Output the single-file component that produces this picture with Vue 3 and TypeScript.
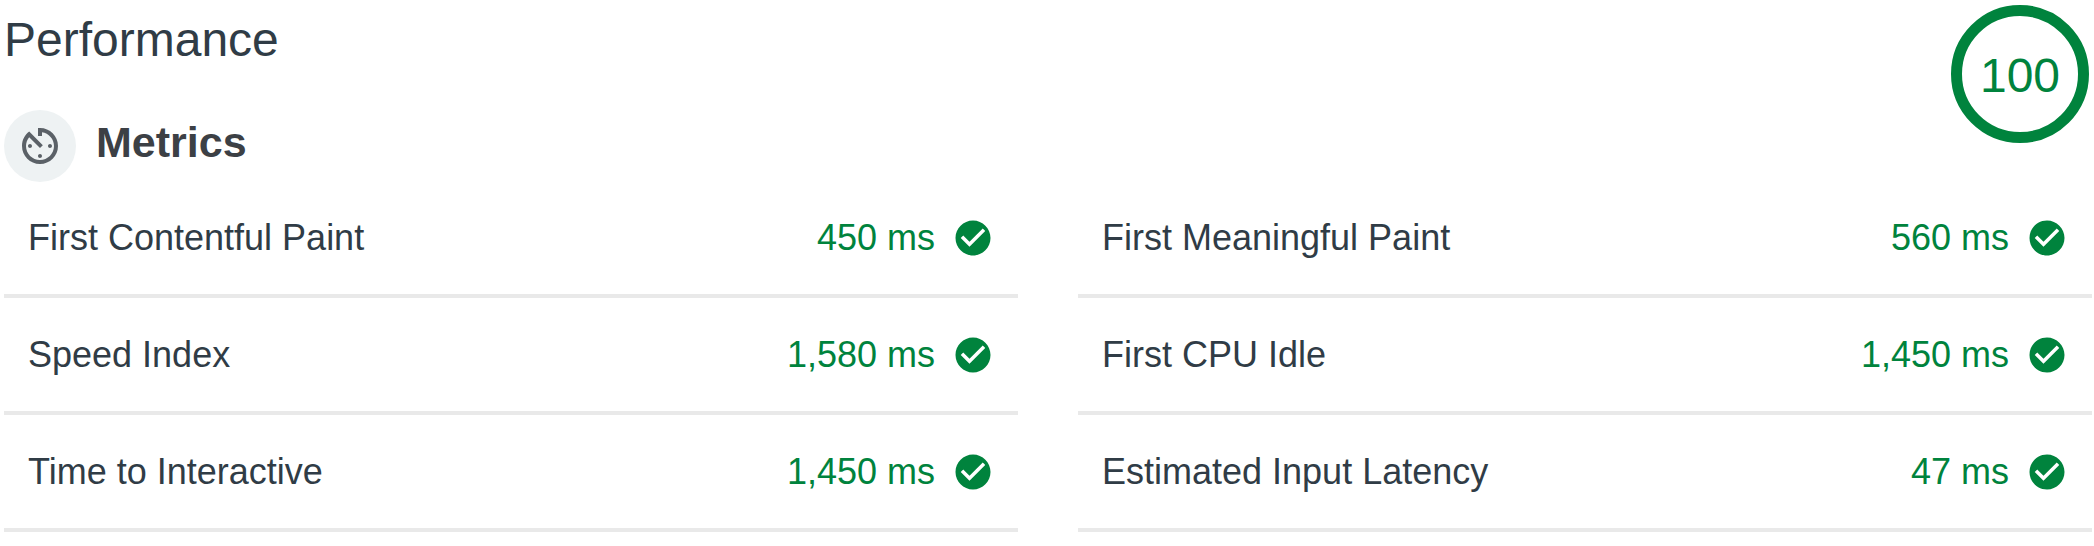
<script setup lang="ts">
interface Metric {
  label: string
  value: string
}

const score: number = 100

const columns: Metric[][] = [
  [
    { label: 'First Contentful Paint', value: '450 ms' },
    { label: 'Speed Index', value: '1,580 ms' },
    { label: 'Time to Interactive', value: '1,450 ms' },
  ],
  [
    { label: 'First Meaningful Paint', value: '560 ms' },
    { label: 'First CPU Idle', value: '1,450 ms' },
    { label: 'Estimated Input Latency', value: '47 ms' },
  ],
]
</script>

<template>
  <main class="report">
    <header class="summary">
      <div class="headings">
        <h1 class="title">Performance</h1>
        <div class="section-heading">
          <span class="badge">
            <svg class="timer" viewBox="0 0 24 24" aria-hidden="true">
              <path
                d="M11 17c0 .55.45 1 1 1s1-.45 1-1-.45-1-1-1-1 .45-1 1zm0-14v4h2V5.08c3.39.49 6 3.39 6 6.92 0 3.87-3.13 7-7 7s-7-3.13-7-7c0-1.68.59-3.22 1.58-4.42L12 13l1.41-1.41-6.8-6.8v.02C4.42 6.45 3 9.05 3 12c0 4.97 4.02 9 9 9 4.97 0 9-4.03 9-9s-4.03-9-9-9h-1zm7 9c0-.55-.45-1-1-1s-1 .45-1 1 .45 1 1 1 1-.45 1-1zM6 12c0 .55.45 1 1 1s1-.45 1-1-.45-1-1-1-1 .45-1 1z"
              />
            </svg>
          </span>
          <h2 class="subtitle">Metrics</h2>
        </div>
      </div>
      <div class="gauge">{{ score }}</div>
    </header>

    <section class="columns">
      <dl v-for="(column, index) in columns" :key="index" class="metrics">
        <div v-for="metric in column" :key="metric.label" class="metric">
          <dt class="label">{{ metric.label }}</dt>
          <dd class="value">
            {{ metric.value }}
            <svg class="check" viewBox="0 0 24 24" aria-hidden="true">
              <path
                d="M12 2C6.48 2 2 6.48 2 12s4.48 10 10 10 10-4.48 10-10S17.52 2 12 2zm-2 15l-5-5 1.41-1.41L10 14.17l7.59-7.59L19 8l-9 9z"
              />
            </svg>
          </dd>
        </div>
      </dl>
    </section>
  </main>
</template>

<style>
body {
  margin: 0;
  background: #fff;
}
</style>

<style scoped>
.report {
  padding: 0 2px 0 4px;
  font-family: 'Helvetica Neue', Helvetica, 'Liberation Sans', Arial, sans-serif;
  color: #303c46;
}

.summary {
  display: flex;
  justify-content: space-between;
  align-items: flex-start;
}

.title {
  margin: 0;
  padding: 12px 0 42px;
  font-size: 48px;
  line-height: 56px;
  font-weight: 400;
}

.section-heading {
  display: flex;
  gap: 20px;
}

.badge {
  display: flex;
  align-items: center;
  justify-content: center;
  width: 72px;
  height: 72px;
  border-radius: 50%;
  background: #eef2f3;
}

.timer {
  width: 48px;
  height: 48px;
  fill: #5b6167;
}

.subtitle {
  margin: 0;
  font-size: 43px;
  line-height: 64px;
  font-weight: 700;
  color: #3c4045;
}

.gauge {
  box-sizing: border-box;
  display: flex;
  align-items: center;
  justify-content: center;
  width: 138px;
  height: 138px;
  margin: 5px 3px 0 0;
  padding-top: 3px;
  border: 11px solid #00833d;
  border-radius: 50%;
  font-size: 48px;
  line-height: 56px;
  color: #00833d;
}

.columns {
  display: grid;
  grid-template-columns: repeat(2, minmax(0, 1fr));
  column-gap: 60px;
  margin-top: -1px;
}

.metrics {
  margin: 0;
}

.metric {
  display: flex;
  align-items: center;
  justify-content: space-between;
  padding: 36px 24px 35px;
  border-bottom: 4px solid #e9e9e9;
  font-size: 36px;
  line-height: 42px;
}

.value {
  display: flex;
  align-items: center;
  gap: 17px;
  margin: 0;
  color: #00833d;
}

.check {
  width: 42px;
  height: 42px;
  fill: #00833d;
}
</style>
